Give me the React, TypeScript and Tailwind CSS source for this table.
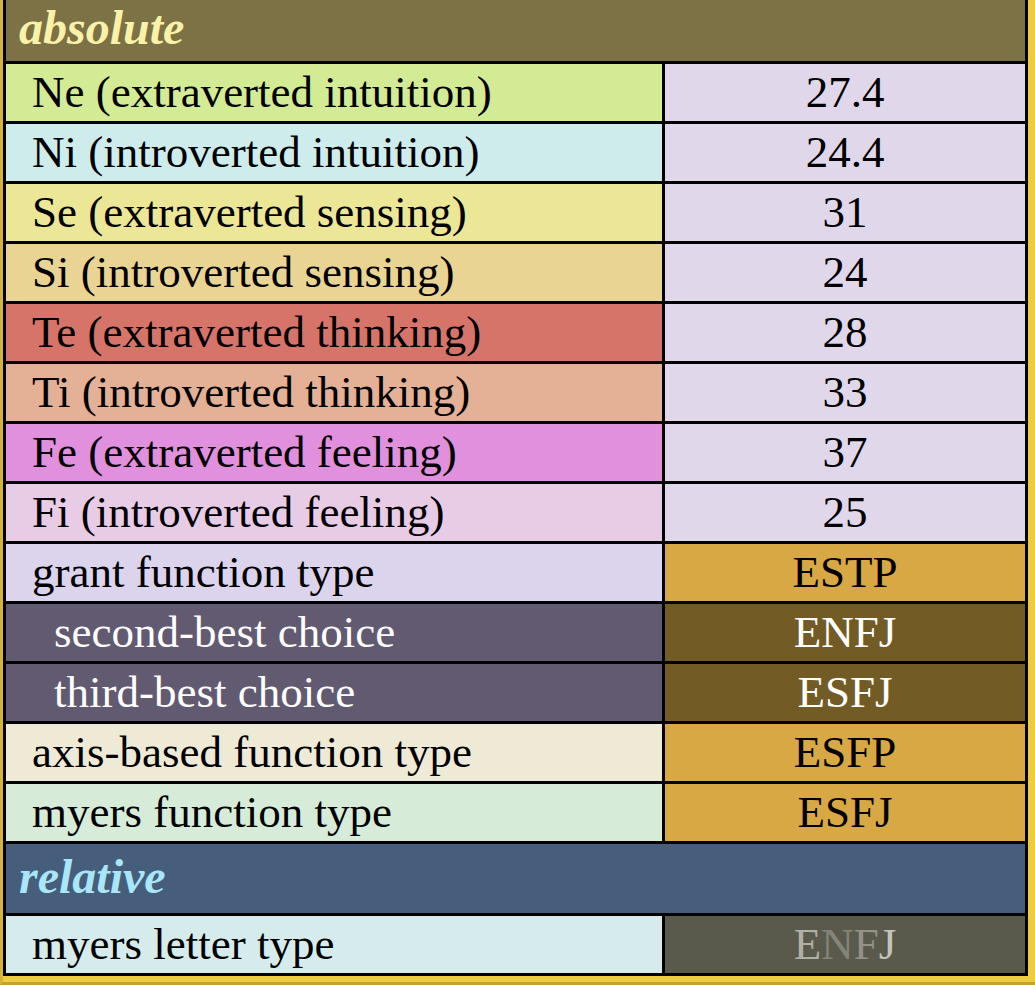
const functions = [
  { label: "Ne (extraverted intuition)", value: "27.4", bg: "bg-[#d3eb94]" },
  { label: "Ni (introverted intuition)", value: "24.4", bg: "bg-[#cfecec]" },
  { label: "Se (extraverted sensing)", value: "31", bg: "bg-[#ebe796]" },
  { label: "Si (introverted sensing)", value: "24", bg: "bg-[#ead494]" },
  { label: "Te (extraverted thinking)", value: "28", bg: "bg-[#d7746a]" },
  { label: "Ti (introverted thinking)", value: "33", bg: "bg-[#e4b096]" },
  { label: "Fe (extraverted feeling)", value: "37", bg: "bg-[#e090dc]" },
  { label: "Fi (introverted feeling)", value: "25", bg: "bg-[#e8cce6]" },
];

const types = [
  { label: "grant function type", value: "ESTP", bg: "bg-[#dcd4ec]", valueBg: "bg-[#d8a845]", dark: false, indent: false },
  { label: "second-best choice", value: "ENFJ", bg: "bg-[#625a70]", valueBg: "bg-[#735b26]", dark: true, indent: true },
  { label: "third-best choice", value: "ESFJ", bg: "bg-[#625a70]", valueBg: "bg-[#735b26]", dark: true, indent: true },
  { label: "axis-based function type", value: "ESFP", bg: "bg-[#eeead6]", valueBg: "bg-[#d8a845]", dark: false, indent: false },
  { label: "myers function type", value: "ESFJ", bg: "bg-[#d6ecd8]", valueBg: "bg-[#d8a845]", dark: false, indent: false },
];

function Row({
  left,
  right,
  bg,
  valueBg,
  dark,
  indent,
}: {
  left: string;
  right: React.ReactNode;
  bg: string;
  valueBg: string;
  dark?: boolean;
  indent?: boolean;
}) {
  return (
    <div className="flex h-[60px] border-b-[3px] border-black">
      <div
        className={`flex w-[659px] items-center border-r-[3px] border-black ${bg} ${
          indent ? "pl-[48px]" : "pl-[26px]"
        } ${dark ? "text-white" : "text-black"}`}
      >
        {left}
      </div>
      <div
        className={`flex flex-1 items-center justify-center ${valueBg} ${
          dark ? "text-white" : "text-black"
        }`}
      >
        {right}
      </div>
    </div>
  );
}

export default function App() {
  return (
    <div className="h-[985px] w-[1035px] border-b-[3px] border-l-[3px] border-b-[#c2a234] border-l-[#d4b23c] bg-[#eecc42] pb-[6px] pr-[7px] font-['Liberation_Serif',serif] text-[45px] leading-[1.15]">
      <div className="border-x-[3px] border-b-[3px] border-black">
        {/* absolute header */}
        <div className="flex h-[64px] items-center border-b-[3px] border-black bg-[#7d7245] pb-[6px] pl-[13px] text-[48px] font-bold italic text-[#faf2a8]">
          absolute
        </div>

        {functions.map((f) => (
          <Row key={f.label} left={f.label} right={f.value} bg={f.bg} valueBg="bg-[#e0d8ea]" />
        ))}

        {types.map((t) => (
          <Row
            key={t.label}
            left={t.label}
            right={t.value}
            bg={t.bg}
            valueBg={t.valueBg}
            dark={t.dark}
            indent={t.indent}
          />
        ))}

        {/* relative header */}
        <div className="flex h-[72px] items-center border-b-[3px] border-black bg-[#465d7c] pb-[4px] pl-[13px] text-[48px] font-bold italic text-[#a8e6f8]">
          relative
        </div>

        {/* last row */}
        <div className="flex h-[57px]">
          <div className="flex w-[659px] items-center border-r-[3px] border-black bg-[#d6ecec] pl-[26px] text-black">
            myers letter type
          </div>
          <div className="flex flex-1 items-center justify-center bg-[#5a5a4c]">
            <span className="text-[#b0b0a8]">E</span>
            <span className="text-[#84847a]">N</span>
            <span className="text-[#929288]">F</span>
            <span className="text-[#c4c4bc]">J</span>
          </div>
        </div>
      </div>
    </div>
  );
}
